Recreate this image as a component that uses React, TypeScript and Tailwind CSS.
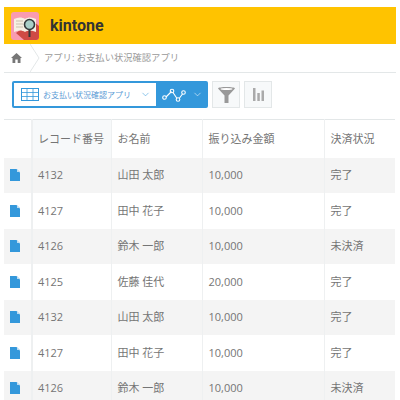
import { ChevronDown } from "lucide-react";

const rows = [
  { id: "4132", name: "山田 太郎", amount: "10,000", status: "完了" },
  { id: "4127", name: "田中 花子", amount: "10,000", status: "完了" },
  { id: "4126", name: "鈴木 一郎", amount: "10,000", status: "未決済" },
  { id: "4125", name: "佐藤 佳代", amount: "20,000", status: "完了" },
  { id: "4132", name: "山田 太郎", amount: "10,000", status: "完了" },
  { id: "4127", name: "田中 花子", amount: "10,000", status: "完了" },
  { id: "4126", name: "鈴木 一郎", amount: "10,000", status: "未決済" },
];

function AppLogo() {
  return (
    <svg width="28" height="28" viewBox="0 0 28 28" className="block">
      <rect width="28" height="28" rx="3" fill="#f99bb0" />
      <path d="M5 21 L22 9 L28 14 V25 a3 3 0 0 1 -3 3 H13 Z" fill="#cf4a45" />
      <path d="M3 7 C7 5 11 5 14 7 C17 5 21 5 25 7 V20 C21 18 17 18 14 20 C11 18 7 18 3 20 Z" fill="#f6efe3" />
      <path d="M5 9 H12 M5 12 H12 M5 15 H12" stroke="#c9bfae" strokeWidth="1.2" />
      <circle cx="18.5" cy="12.5" r="5" fill="#a9cfc8" stroke="#33383a" strokeWidth="1.6" />
      <path d="M18.5 17.5 V25" stroke="#33383a" strokeWidth="2" />
    </svg>
  );
}

function DocIcon() {
  return (
    <svg width="10" height="12" viewBox="0 0 10 12" className="block">
      <path d="M0 0 H6.5 L10 3.5 V12 H0 Z" fill="#3498db" />
      <path d="M7 0 L10 3 H7 Z" fill="#bcdcf2" />
    </svg>
  );
}

export default function App() {
  return (
    <div className="w-[400px] h-[400px] overflow-hidden bg-white pt-[7px] pl-[4px] pr-[4px] font-['Open_Sans','Noto_Sans_CJK_JP',sans-serif] text-[#757575]">
      <div className="h-[37px] bg-[#ffc300] flex items-center pl-[7px]">
        <AppLogo />
        <span className="ml-[11px] text-[16px] font-bold text-[#333] font-['Roboto',sans-serif]">kintone</span>
      </div>

      <div className="h-[29px] border-b border-[#e3e7e8] flex items-center">
        <div className="w-[30px] h-full relative flex items-center pl-[7px]">
          <svg width="11" height="10" viewBox="0 0 11 10">
            <path d="M5.5 0 L11 5 H9.5 V10 H6.7 V6.5 H4.3 V10 H1.5 V5 H0 Z" fill="#777" />
          </svg>
          <svg width="10" height="28" viewBox="0 0 10 28" className="absolute right-[-6px] top-0">
            <path d="M0 0 L9 14 L0 28" fill="none" stroke="#e3e7e8" />
          </svg>
        </div>
        <span className="ml-[10px] text-[9.3px] text-[#999] whitespace-nowrap">アプリ: お支払い状況確認アプリ</span>
      </div>

      <div className="flex h-[46px] pt-[8px] pl-[8px] gap-[4px]">
        <div className="w-[196px] h-[27px] bg-[#3498db] rounded-[2px] flex p-[2px] pr-0">
          <div className="w-[142px] bg-white flex items-center pl-[7px]">
            <svg width="18" height="13" viewBox="0 0 18 13" fill="none" stroke="#3498db">
              <rect x="0.5" y="0.5" width="17" height="12" />
              <path d="M0 4.5 H18 M0 8.5 H18 M6 0 V13 M12 0 V13" strokeWidth="0.8" />
            </svg>
            <span className="ml-[4px] text-[8px] text-[#5b9bd5] whitespace-nowrap">お支払い状況確認アプリ</span>
            <ChevronDown className="ml-auto mr-[5px] text-[#3498db]" size={11} strokeWidth={1.2} />
          </div>
          <div className="flex-1 flex items-center pl-[6px]">
            <svg width="24" height="14" viewBox="0 0 24 14" fill="none" stroke="#fff" strokeWidth="1.1">
              <path d="M4 9 L9.5 3.5 M11 4.5 L15 10.5 M17.5 10 L20.5 6" />
              <circle cx="2.5" cy="9.5" r="1.8" />
              <circle cx="10" cy="3" r="1.8" />
              <circle cx="16" cy="11.5" r="1.8" />
              <circle cx="21.5" cy="4.5" r="1.8" />
            </svg>
            <ChevronDown className="ml-[6px] text-white" size={11} strokeWidth={1.2} />
          </div>
        </div>
        <div className="w-[28px] h-[27px] bg-[#f7f9fa] border border-[#e3e7e8] flex items-center justify-center">
          <svg width="17" height="16" viewBox="0 0 17 16">
            <path d="M0 1.5 C0 -0.5 17 -0.5 17 1.5 L10.5 8.5 V16 H6.5 V8.5 Z" fill="#999" />
            <ellipse cx="8.5" cy="2" rx="6" ry="1" fill="#fff" />
          </svg>
        </div>
        <div className="w-[28px] h-[27px] bg-[#f7f9fa] border border-[#e3e7e8] flex items-center justify-center">
          <svg width="11" height="13" viewBox="0 0 11 13" fill="#aaa">
            <rect x="0" y="0" width="2.5" height="13" />
            <rect x="4.3" y="5" width="2.5" height="8" />
            <rect x="8.5" y="2.5" width="2.5" height="10.5" />
          </svg>
        </div>
      </div>

      <table className="w-[391px] table-fixed border-collapse border-t border-[#e3e7e8] text-[11px]">
        <colgroup>
          <col className="w-[28px]" />
          <col className="w-[79px]" />
          <col className="w-[91px]" />
          <col className="w-[122px]" />
          <col className="w-[71px]" />
        </colgroup>
        <thead>
          <tr className="h-[38px] text-left">
            <th className="font-normal"></th>
            <th className="font-normal pl-[5px] bg-[#f7f9fa] border-l-2 border-[#eef0f1]">レコード番号</th>
            <th className="font-normal pl-[6px] border-l border-[#eef0f1]">お名前</th>
            <th className="font-normal pl-[6px] border-l border-[#eef0f1]">振り込み金額</th>
            <th className="font-normal pl-[6px] border-l border-[#eef0f1]">決済状況</th>
          </tr>
        </thead>
        <tbody>
          {rows.map((r, i) => (
            <tr key={i} className={i % 2 === 0 ? "h-[35.5px] bg-[#f4f4f4]" : "h-[35.5px] bg-white"}>
              <td className="pl-[6px]"><DocIcon /></td>
              <td className="pl-[5px] border-l-2 border-[#eef0f1]">{r.id}</td>
              <td className="pl-[6px] border-l border-[#eef0f1]">{r.name}</td>
              <td className="pl-[6px] border-l border-[#eef0f1]">{r.amount}</td>
              <td className="pl-[6px] border-l border-[#eef0f1]">{r.status}</td>
            </tr>
          ))}
        </tbody>
      </table>
    </div>
  );
}
